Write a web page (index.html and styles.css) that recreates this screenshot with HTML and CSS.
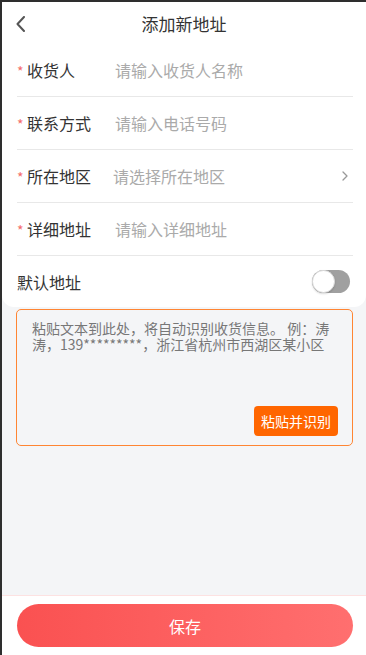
FILE: index.html
```html
<!DOCTYPE html>
<html lang="zh-CN">
<head>
  <meta charset="UTF-8">
  <meta name="viewport" content="width=device-width, initial-scale=1.0">
  <title>添加新地址</title>
  <link rel="stylesheet" href="styles.css">
</head>
<body>
  <div class="page">
    <!-- Navigation bar -->
    <header class="nav">
      <span class="back">
        <svg width="10" height="16" viewBox="0 0 10 16"><path d="M8 1 L1.5 8 L8 15" fill="none" stroke="#555" stroke-width="2" stroke-linecap="round" stroke-linejoin="round"/></svg>
      </span>
      <h1 class="nav-title">添加新地址</h1>
    </header>

    <!-- Address form -->
    <div class="card">
      <div class="row">
        <span class="label"><i class="req">*</i>收货人</span>
        <input class="field" type="text" placeholder="请输入收货人名称">
      </div>
      <div class="row">
        <span class="label"><i class="req">*</i>联系方式</span>
        <input class="field" type="tel" placeholder="请输入电话号码">
      </div>
      <div class="row">
        <span class="label"><i class="req">*</i>所在地区</span>
        <span class="field picker">请选择所在地区</span>
        <svg class="arrow" width="6" height="10" viewBox="0 0 6 10"><path d="M1 1 L5 5 L1 9" fill="none" stroke="#999" stroke-width="1.3" stroke-linecap="round" stroke-linejoin="round"/></svg>
      </div>
      <div class="row">
        <span class="label"><i class="req">*</i>详细地址</span>
        <input class="field" type="text" placeholder="请输入详细地址">
      </div>
      <div class="row last">
        <span class="label">默认地址</span>
        <span class="switch"><span class="knob"></span></span>
      </div>
    </div>

    <!-- Smart paste -->
    <div class="paste">
      <textarea class="paste-text" placeholder="粘贴文本到此处，将自动识别收货信息。 例：涛涛，139*********，浙江省杭州市西湖区某小区"></textarea>
      <button class="paste-btn">粘贴并识别</button>
    </div>

    <div class="spacer"></div>

    <footer class="bottom">
      <button class="save">保存</button>
    </footer>
  </div>
</body>
</html>
```

FILE: styles.css
```css
body {
  margin: 0;
  border-top: 2px solid #2e2e2e;
  border-left: 2px solid #2e2e2e;
  background-color: #f4f5f7;
  font-family: "Noto Sans CJK SC", "Noto Sans", sans-serif;
  color: #333;
}

.page {
  height: 653px;
  display: flex;
  flex-direction: column;
}

/* nav */
.nav {
  height: 42px;
  background-color: #fff;
  display: flex;
  align-items: center;
  justify-content: center;
  position: relative;
}

.back {
  position: absolute;
  left: 14px;
  top: 14px;
  display: flex;
}

.nav-title {
  margin: 0;
  font-size: 17px;
  font-weight: normal;
  color: #333;
}

/* form card */
.card {
  background-color: #fff;
  padding: 0 13px 0 15px;
  border-radius: 0 0 12px 12px;
}

.row {
  height: 52px;
  display: flex;
  align-items: center;
  border-bottom: 1px solid #e8e8e8;
}

.row.last {
  height: 51px;
  border-bottom: none;
}

.label {
  width: 98px;
  flex-shrink: 0;
  font-size: 16px;
  color: #333;
}

.req {
  display: inline-block;
  width: 10px;
  font-style: normal;
  font-size: 14px;
  color: #f56c6c;
}

.field {
  flex: 1;
  min-width: 0;
  border: none;
  outline: none;
  padding: 0;
  background: transparent;
  font-family: inherit;
  font-size: 16px;
  color: #333;
}

.field::placeholder {
  color: #aaa;
}

.picker {
  margin-left: -2px;
  color: #aaa;
}

.arrow {
  margin-right: 5px;
}

.row.last .label {
  flex: 1;
}

.switch {
  width: 38px;
  height: 23px;
  margin-right: 3px;
  border-radius: 12px;
  background-color: #a0a0a0;
  display: flex;
  align-items: center;
}

.knob {
  width: 23px;
  height: 23px;
  box-sizing: border-box;
  border-radius: 50%;
  background-color: #fff;
  border: 1px solid #ddd;
  box-shadow: 0 1px 2px rgba(0, 0, 0, 0.15);
}

/* paste box */
.paste {
  height: 137px;
  box-sizing: border-box;
  margin: 2px 13px 0 14px;
  padding: 10px 14px 9px 15px;
  border: 1px solid #ff8533;
  border-radius: 5px;
  display: flex;
  flex-direction: column;
}

.paste-text {
  flex: 1;
  border: none;
  outline: none;
  resize: none;
  padding: 0;
  background: transparent;
  font-family: inherit;
  font-size: 14px;
  line-height: 16px;
  color: #666;
}

.paste-text::placeholder {
  color: #777;
}

.paste-btn {
  align-self: flex-end;
  height: 30px;
  padding: 0 7px;
  border: none;
  border-radius: 4px;
  background-color: #ff6600;
  color: #fff;
  font-family: inherit;
  font-size: 14px;
}

.spacer {
  flex: 1;
}

/* bottom bar */
.bottom {
  background-color: #fff;
  border-top: 1px solid #fde2e2;
  padding: 8px 13px 8px 15px;
}

.save {
  width: 100%;
  height: 43px;
  border: none;
  border-radius: 22px;
  background: linear-gradient(90deg, #fa5151, #ff6f6f);
  color: #fff;
  font-family: inherit;
  font-size: 16px;
}
```
